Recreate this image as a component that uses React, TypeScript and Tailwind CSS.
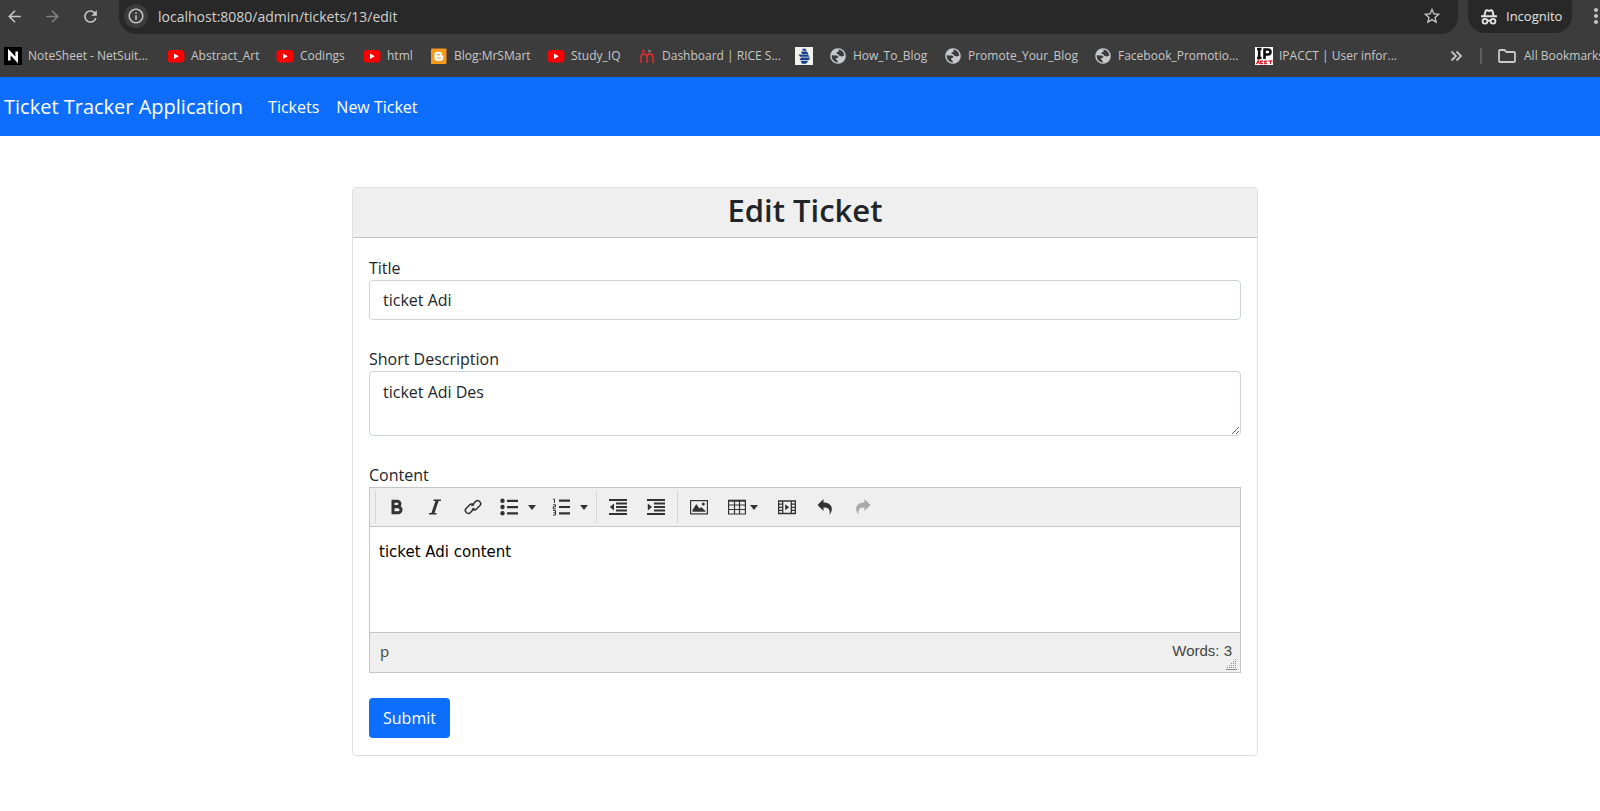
import React from "react";
import { MdArrowBack, MdArrowForward, MdRefresh, MdStarBorder, MdInfoOutline, MdMoreVert } from "react-icons/md";

function YouTubeIcon() {
  return (
    <svg viewBox="0 0 18 18" className="size-[18px]">
      <rect x="0.5" y="3" width="17" height="12.5" rx="3.5" fill="#f00" />
      <path d="M7 6.5v5.5l4.8-2.75z" fill="#fff" />
    </svg>
  );
}

function NoteIcon() {
  return (
    <svg viewBox="0 0 18 18" className="size-[18px]">
      <rect width="18" height="18" fill="#000" />
      <path d="M5.3 13.5V5l7.4 8V4.5" fill="none" stroke="#fff" strokeWidth="2.6" />
    </svg>
  );
}

function BloggerIcon() {
  return (
    <svg viewBox="0 0 18 18" className="size-[18px]">
      <rect x="1" y="1.5" width="15.5" height="15.5" rx="1" fill="#f79a1c" />
      <path d="M7 4.7h2.5a2.5 2.5 0 0 1 2.5 2.5c0 1 .3 1.3 1.2 1.5v2.3a2.8 2.8 0 0 1-2.8 2.8H7a2.5 2.5 0 0 1-2.5-2.5V7.2A2.5 2.5 0 0 1 7 4.7z" fill="#fff" />
      <path d="M7.2 7.6h2.2M7.2 11h3.4" stroke="#f79a1c" strokeWidth="1.2" strokeLinecap="round" />
    </svg>
  );
}

function RiceIcon() {
  return (
    <svg viewBox="0 0 18 18" className="size-[18px]" fill="none">
      <path d="M3 16v-5.5q0-3.5 3-3.5t3 3.5V16M9 16v-5.5q0-3.5 3-3.5t3 3.5V16" stroke="#c92f33" strokeWidth="1.8" />
      <circle cx="5.5" cy="4" r="1.6" fill="#c92f33" />
      <circle cx="11.5" cy="4" r="1.6" fill="#777" />
    </svg>
  );
}

function ShipIcon() {
  return (
    <svg viewBox="0 0 18 18" className="size-[18px]">
      <rect width="18" height="18" fill="#f1f2ea" />
      <path d="M7 1.8h4l.5 2H8zM6 4.5h6l1.5 2.4H7zM3.5 7.6h9.5l1.5 2.2H5zM6 10.6h9L14 13H4.500zM5.500 13.800h8l-2.500 3H7z" fill="#193f8c" />
    </svg>
  );
}

function GlobeIcon() {
  return (
    <svg viewBox="0 0 18 18" className="size-[18px]">
      <circle cx="9" cy="9" r="7.8" fill="#c7c9cc" />
      <path d="M2.8 8.2l5 .3c1.200.2 1.700.9 1.700 2.100l-2.200.3v2l1.500 1.200v1.400c-3.300-.2-6-2.900-6.100-6.300z" fill="#3c3c3c" />
      <path d="M9.2 2.6c3.200.1 5.900 2.700 6.100 6l-2.300.8-2.300-.5c-.8-.4-1-1.300-1.800-1.800l-1.600-.4.600-1.500 2-.7z" fill="#3c3c3c" />
    </svg>
  );
}

function IpIcon() {
  return (
    <svg viewBox="0 0 18 18" className="size-[18px]">
      <rect width="18" height="18" fill="#fff" />
      <path d="M2 2h4.500M2 11h4.500M4.200 2v9M9.500 12V2.500h3.500a2.500 2.500 0 0 1 0 5h-3" fill="none" stroke="#111" strokeWidth="2.6" />
      <path d="M1.500 17l2-3.500.8 3.500M8 14.200H5.800v2.300H8M12 14.200H9.800v2.300H12M13.500 14h4M15.500 14v3" fill="none" stroke="#d8232a" strokeWidth="1.4" />
    </svg>
  );
}

function IncognitoIcon() {
  return (
    <svg viewBox="0 0 18 18" className="size-[18px]" fill="none" stroke="#e3e3e3" strokeWidth="1.8">
      <path d="M1 8.2h16M4.300 8l1.300-5q.3-1 1.300-.7l2.100.6 2.100-.6q1-.3 1.300.7l1.300 5" strokeWidth="2" />
      <circle cx="5" cy="13.3" r="2.4" />
      <circle cx="13" cy="13.3" r="2.4" />
      <path d="M7.400 12.900q1.600-.8 3.200 0" />
    </svg>
  );
}

const bookmarks: { label: string; icon: React.ReactNode; width: string }[] = [
  { label: "NoteSheet - NetSuit...", icon: <NoteIcon />, width: "w-[163px]" },
  { label: "Abstract_Art", icon: <YouTubeIcon />, width: "w-[109px]" },
  { label: "Codings", icon: <YouTubeIcon />, width: "w-[87px]" },
  { label: "html", icon: <YouTubeIcon />, width: "w-[67px]" },
  { label: "Blog:MrSMart", icon: <BloggerIcon />, width: "w-[117px]" },
  { label: "Study_IQ", icon: <YouTubeIcon />, width: "w-[91px]" },
  { label: "Dashboard | RICE S...", icon: <RiceIcon />, width: "w-[157px]" },
  { label: "", icon: <ShipIcon />, width: "w-[34px]" },
  { label: "How_To_Blog", icon: <GlobeIcon />, width: "w-[115px]" },
  { label: "Promote_Your_Blog", icon: <GlobeIcon />, width: "w-[150px]" },
  { label: "Facebook_Promotio...", icon: <GlobeIcon />, width: "w-[161px]" },
  { label: "IPACCT | User infor...", icon: <IpIcon />, width: "w-[140px]" },
];

function BrowserChrome() {
  return (
    <header className="overflow-hidden bg-[#3c3c3c] text-[#c7c7c7]">
      <div className="flex h-[34px] items-start">
        <div className="flex h-8 shrink-0 items-center gap-[19px] pr-[19px] pl-[5px]">
          <button aria-label="Back"><MdArrowBack className="size-[19px]" /></button>
          <button aria-label="Forward" className="text-[#808080]"><MdArrowForward className="size-[19px]" /></button>
          <button aria-label="Reload"><MdRefresh className="size-[19px]" /></button>
        </div>
        <div className="flex h-[34px] flex-1 items-center rounded-b-[17px] bg-[#282828] pr-4 pb-0.5 pl-[5px]">
          <button aria-label="Site information" className="flex size-6 items-center justify-center rounded-full bg-[#3c3c3c]">
            <MdInfoOutline className="size-[18px]" />
          </button>
          <input
            aria-label="Address"
            defaultValue="localhost:8080/admin/tickets/13/edit"
            className="ml-[10px] min-w-0 flex-1 bg-transparent text-[14px] text-[#d0d0d0] outline-none"
          />
          <button aria-label="Bookmark this page"><MdStarBorder className="size-5" /></button>
        </div>
        <div className="ml-[10px] flex h-[33px] w-[104px] shrink-0 items-center gap-2 rounded-b-[17px] bg-[#282828] pl-3 text-[13px] text-[#e3e3e3]">
          <IncognitoIcon />
          Incognito
        </div>
        <button aria-label="Menu" className="-mr-2 ml-3 flex h-8 shrink-0 items-center"><MdMoreVert className="size-6" /></button>
      </div>
      <nav aria-label="Bookmarks" className="flex h-[43px] items-center pl-1 text-[12px]">
        {bookmarks.map((b, i) => (
          <a key={i} href="#" aria-label={b.label || "Ship"} className={`flex shrink-0 items-center gap-[6px] whitespace-nowrap ${b.width}`}>
            <span className="shrink-0">{b.icon}</span>
            {b.label}
          </a>
        ))}
        <div className="ml-auto flex shrink-0 items-center">
          <button aria-label="More bookmarks">
            <svg viewBox="0 0 12 12" className="size-3" fill="none" stroke="currentColor" strokeWidth="1.8">
              <path d="M1.500 1.500L6 6l-4.500 4.500M6.500 1.500L11 6l-4.500 4.500" />
            </svg>
          </button>
          <span className="ml-[18px] h-4 w-0.5 bg-[#5e5e5e]" />
          <a href="#" className="-mr-1 ml-4 flex items-center gap-2 whitespace-nowrap">
            <svg viewBox="0 0 18 14" className="h-[14px] w-[18px]" fill="none" stroke="currentColor" strokeWidth="1.8">
              <path d="M1 2q0-1 1-1h4.500l2 2H16q1 0 1 1v8q0 1-1 1H2q-1 0-1-1z" />
            </svg>
            All Bookmarks
          </a>
        </div>
      </nav>
    </header>
  );
}

function Caret() {
  return (
    <svg viewBox="0 0 8 5" className="h-[5px] w-2" fill="#333"><path d="M0 0h8L4 5z" /></svg>
  );
}

function BoldIcon() {
  return (
    <svg viewBox="0 0 18 18" className="size-[18px]" fill="none" stroke="#333" strokeWidth="3">
      <path d="M5 3.200h4.300a2.500 2.500 0 0 1 0 5.300H5zM5 8.700h5a3 3 0 0 1 0 6.100H5z" />
    </svg>
  );
}

function ItalicIcon() {
  return (
    <svg viewBox="0 0 18 18" className="size-[18px]" fill="none" stroke="#333">
      <path d="M7.500 2.200h7.500M3 15.800h7.500" strokeWidth="1.400" />
      <path d="M11.300 2.200L6.700 15.800" strokeWidth="3" />
    </svg>
  );
}

function LinkIcon() {
  return (
    <svg viewBox="0 0 18 18" className="size-[18px]" fill="none" stroke="#333" strokeWidth="1.500" strokeLinecap="round">
      <path d="M8 7.500l3.500-4a2.700 2.700 0 0 1 3.800-.2l.5.500a2.700 2.700 0 0 1 .1 3.800L12.500 11a2.600 2.600 0 0 1-4 0" />
      <path d="M10 10.500l-3.500 4a2.700 2.700 0 0 1-3.800.2l-.5-.5a2.700 2.700 0 0 1-.1-3.800L5.500 7a2.600 2.600 0 0 1 4 0" />
    </svg>
  );
}

function BulletIcon() {
  return (
    <svg viewBox="0 0 18 18" className="size-[18px]" fill="#333">
      <circle cx="2.500" cy="2.700" r="2.200" /><circle cx="2.500" cy="9" r="2.200" /><circle cx="2.500" cy="15.300" r="2.200" />
      <path d="M7 1.700h11v2.200H7zM7 8h11v2.200H7zM7 14.300h11v2.200H7z" />
    </svg>
  );
}

function NumberIcon() {
  return (
    <svg viewBox="0 0 18 18" className="size-[18px]" fill="none" stroke="#333">
      <path d="M7 2.700h11M7 9h11M7 15.300h11" strokeWidth="2.200" />
      <path d="M1 1.200h1.500V5M1 6.800h2.500v2H1.200v2h2.500M1 12.500h2.500v4.500H1M1.500 14.700h2" strokeWidth="1" />
    </svg>
  );
}

function IndentIcon({ outward = false }: { outward?: boolean }) {
  return (
    <svg viewBox="0 0 18 18" className="size-[18px]" fill="#333">
      <path d="M0 1h18v2H0zM7 4.500h11v2H7zM7 8h11v2H7zM7 11.500h11v2H7zM0 15h18v2H0z" />
      <path d={outward ? "M5 5.500v7L0.800 9z" : "M0.800 5.500v7L5 9z"} />
    </svg>
  );
}

function ImageIcon() {
  return (
    <svg viewBox="0 0 18 18" className="size-[18px]">
      <rect x="0.600" y="2.600" width="16.800" height="13.300" fill="none" stroke="#333" strokeWidth="1.200" />
      <path d="M2.500 13.800V12l3.800-6 3.200 4.500 1.700-1.500 4.300 4v.8z" fill="#333" />
      <circle cx="13.300" cy="6" r="1.500" fill="#333" />
    </svg>
  );
}

function TableIcon() {
  return (
    <svg viewBox="0 0 18 18" className="size-[18px]" fill="none" stroke="#333">
      <path d="M0 2.700h18" strokeWidth="2" />
      <path d="M.6 2v14h16.800V2M6.500 2v14M11.500 2v14M.6 7h16.800M.6 11.500h16.800" strokeWidth="1.200" />
    </svg>
  );
}

function MediaIcon() {
  return (
    <svg viewBox="0 0 18 18" className="size-[18px]">
      <path d="M.6 3h16.800v12.500H.6zM4.700 3v12.500M13.300 3v12.500M.6 6.200h4M.6 9.300h4M.6 12.400h4M13.300 6.200h4M13.300 9.300h4M13.300 12.400h4" fill="none" stroke="#333" strokeWidth="1.300" />
      <path d="M7.200 6.200v6l4-3z" fill="#333" />
    </svg>
  );
}

function UndoIcon({ redo = false }: { redo?: boolean }) {
  return (
    <svg viewBox="0 0 18 18" className="size-[18px]">
      <path
        d={redo ? "M10.500 1L16.500 7l-6 6V9.500C6 9 3.500 11 4.500 17-.5 10 3 4.500 10.500 4.500z" : "M7.500 1L1.500 7l6 6V9.500c4.500-.5 7 1.500 6 7.500 5-7 1.500-12.500-6-12.500z"}
        fill={redo ? "#a8a8a8" : "#333"}
      />
    </svg>
  );
}

function ToolButton({ label, caret, children }: { label: string; caret?: boolean; children: React.ReactNode }) {
  return (
    <button
      type="button"
      aria-label={label}
      className={caret ? "flex h-8 w-[50px] items-center justify-between pr-1.5 pl-2" : "flex h-8 w-[38px] items-center justify-center"}
    >
      {children}
      {caret && <Caret />}
    </button>
  );
}

function Editor() {
  return (
    <div className="border border-[#c5c5c5]">
      <div role="toolbar" aria-label="Formatting" className="flex h-[39px] items-center border-b border-[#c5c5c5] bg-[#efefef] pl-[5px]">
        <div className="flex border-l border-[#d6d6d6] pl-0.5">
          <ToolButton label="Bold"><BoldIcon /></ToolButton>
          <ToolButton label="Italic"><ItalicIcon /></ToolButton>
          <ToolButton label="Insert link"><LinkIcon /></ToolButton>
          <ToolButton label="Bullet list" caret><BulletIcon /></ToolButton>
          <span className="w-0.5" />
          <ToolButton label="Numbered list" caret><NumberIcon /></ToolButton>
        </div>
        <div className="ml-0.5 flex border-l border-[#d6d6d6] pl-0.5">
          <ToolButton label="Decrease indent"><IndentIcon outward /></ToolButton>
          <ToolButton label="Increase indent"><IndentIcon /></ToolButton>
        </div>
        <div className="ml-0.5 flex border-l border-[#d6d6d6] pl-0.5">
          <ToolButton label="Insert image"><ImageIcon /></ToolButton>
          <button type="button" aria-label="Table" className="flex h-8 w-[50px] items-center gap-1 pl-[10px]">
            <TableIcon />
            <Caret />
          </button>
          <ToolButton label="Insert video"><MediaIcon /></ToolButton>
          <ToolButton label="Undo"><UndoIcon /></ToolButton>
          <ToolButton label="Redo"><UndoIcon redo /></ToolButton>
        </div>
      </div>
      <textarea
        id="content"
        defaultValue="ticket Adi content"
        className="block h-[105px] w-full resize-none bg-white px-[9px] py-[14px] font-['DejaVu_Sans',Verdana,sans-serif] text-[15px] leading-[22px] text-black outline-none"
      />
      <div className="relative flex h-10 items-center justify-between border-t border-[#c5c5c5] bg-[#efefef] pr-2 pb-0.5 pl-[10px] text-[15px] text-[#444]">
        <span>p</span>
        <span className="font-['Liberation_Sans',Arial,sans-serif]">Words: 3</span>
        <svg viewBox="0 0 11 11" className="absolute right-[3px] bottom-[2px] size-[11px]" fill="#8c8c8c">
          <path d="M9 0h1v1H9zM7 2h1v1H7zM9 2h1v1H9zM5 4h1v1H5zM7 4h1v1H7zM9 4h1v1H9zM3 6h1v1H3zM5 6h1v1H5zM7 6h1v1H7zM9 6h1v1H9zM1 8h1v1H1zM3 8h1v1H3zM5 8h1v1H5zM7 8h1v1H7zM9 8h1v1H9zM0 10h11v1H0z" />
        </svg>
      </div>
    </div>
  );
}

export default function App() {
  return (
    <div className="min-h-screen bg-white font-['Open_Sans','Noto_Sans',sans-serif] text-base text-[#212529]">
      <BrowserChrome />
      <nav className="flex h-[59px] items-center bg-[#0d6efd] pl-1 text-white">
        <a href="#" className="text-[20px]">Ticket Tracker Application</a>
        <a href="#" className="ml-[25px]">Tickets</a>
        <a href="#" className="ml-[17px]">New Ticket</a>
      </nav>
      <main className="pt-[51px] pb-12 pl-[10px]">
        <section className="mx-auto max-w-[906px] rounded border border-[#dfdfdf]">
          <div className="h-[50px] border-b border-[#c4c4c4] bg-[#efefef]">
            <h1 className="text-center text-[31px] leading-[44px] font-semibold">Edit Ticket</h1>
          </div>
          <form className="px-4 pt-[17px] pb-[17px]" onSubmit={(e) => e.preventDefault()}>
            <label htmlFor="title" className="block h-[25px] leading-[26px]">Title</label>
            <input
              id="title"
              defaultValue="ticket Adi"
              className="block h-10 w-full rounded border border-[#ced4da] px-[13px] outline-none"
            />
            <label htmlFor="description" className="mt-[26px] block h-[25px] leading-[26px]">Short Description</label>
            <textarea
              id="description"
              defaultValue="ticket Adi Des"
              className="block h-[65px] w-full resize-y rounded border border-[#ced4da] px-[13px] py-2 leading-[25px] outline-none"
            />
            <label htmlFor="content" className="mt-[26px] block h-[25px] leading-[26px]">Content</label>
            <Editor />
            <button type="submit" className="mt-[25px] block h-10 rounded bg-[#0d6efd] px-[14px] text-white">Submit</button>
          </form>
        </section>
      </main>
    </div>
  );
}
